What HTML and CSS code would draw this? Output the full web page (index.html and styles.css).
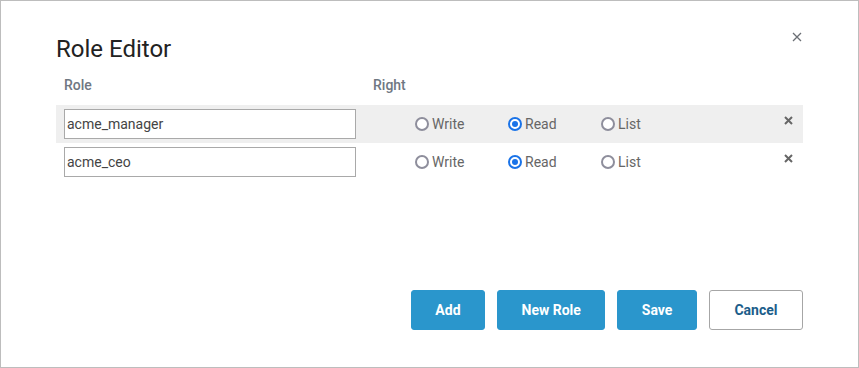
FILE: index.html
```html
<!DOCTYPE html>
<html lang="en">
<head>
  <meta charset="UTF-8">
  <meta name="viewport" content="width=device-width, initial-scale=1">
  <title>Role Editor</title>
  <link rel="stylesheet" href="styles.css">
</head>
<body>
  <div class="dialog">
    <div class="dialog-header">
      <h1>Role Editor</h1>
      <button class="close" aria-label="Close">
        <svg width="10" height="10" viewBox="0 0 10 10"><path d="M1 1L9 9M9 1L1 9" stroke="#6b6f75" stroke-width="1.3" fill="none"/></svg>
      </button>
    </div>

    <div class="table-head">
      <span class="col-role">Role</span>
      <span class="col-right">Right</span>
    </div>

    <div class="role-row shaded">
      <input class="role-input" type="text" value="acme_manager">
      <div class="rights">
        <label class="option"><input type="radio" name="r1"> Write</label>
        <label class="option"><input type="radio" name="r1" checked> Read</label>
        <label class="option"><input type="radio" name="r1"> List</label>
      </div>
      <button class="remove" aria-label="Remove">
        <svg width="9" height="9" viewBox="0 0 9 9"><path d="M1 1L8 8M8 1L1 8" stroke="#666" stroke-width="2" fill="none"/></svg>
      </button>
    </div>
    <div class="role-row">
      <input class="role-input" type="text" value="acme_ceo">
      <div class="rights">
        <label class="option"><input type="radio" name="r2"> Write</label>
        <label class="option"><input type="radio" name="r2" checked> Read</label>
        <label class="option"><input type="radio" name="r2"> List</label>
      </div>
      <button class="remove" aria-label="Remove">
        <svg width="9" height="9" viewBox="0 0 9 9"><path d="M1 1L8 8M8 1L1 8" stroke="#666" stroke-width="2" fill="none"/></svg>
      </button>
    </div>

    <div class="footer">
      <button class="btn">Add</button>
      <button class="btn">New Role</button>
      <button class="btn">Save</button>
      <button class="btn btn-outline">Cancel</button>
    </div>
  </div>
</body>
</html>
```

FILE: styles.css
```css
/* Base */
* {
  box-sizing: border-box;
  margin: 0;
  padding: 0;
}
body {
  font-family: 'Roboto', 'Liberation Sans', sans-serif;
  background: #fff;
  color: #333;
}
.dialog {
  width: 859px;
  height: 368px;
  border: 1px solid #bdbdbd;
  padding: 0 55px 37px 55px;
  display: flex;
  flex-direction: column;
}
.dialog-header {
  display: flex;
  justify-content: space-between;
  align-items: flex-start;
}
.dialog-header h1 {
  font-size: 24px;
  font-weight: 400;
  line-height: 28px;
  color: #222;
  margin-top: 34px;
}
.close {
  background: none;
  border: none;
  margin-top: 30px;
  width: 12px;
  height: 12px;
  display: flex;
  align-items: center;
  justify-content: center;
  cursor: pointer;
}
/* Table */
.table-head {
  display: flex;
  font-size: 14px;
  font-weight: 500;
  line-height: 20px;
  color: #6f7782;
  margin-top: 12px;
  margin-bottom: 10px;
}
.col-role {
  width: 317px;
  padding-left: 8px;
}
.role-row {
  display: flex;
  align-items: center;
  height: 38px;
  padding: 0 8px;
}
.role-row.shaded {
  background: #efefef;
}
.role-input {
  width: 292px;
  height: 30px;
  border: 1px solid #a9a9a9;
  background: #fff;
  font-family: inherit;
  font-size: 14px;
  color: #444;
  padding: 0 2px;
  outline: none;
}
.rights {
  display: flex;
  margin-left: 59px;
}
.option {
  width: 93px;
  display: flex;
  align-items: center;
  gap: 3px;
  font-size: 14px;
  color: #666;
}
.option input {
  appearance: none;
  width: 14px;
  height: 14px;
  border: 2px solid #8e8e9c;
  border-radius: 50%;
  background: #fff;
  position: relative;
}
.option input:checked {
  border-color: #1a73e8;
}
.option input:checked::after {
  content: '';
  position: absolute;
  left: 2px;
  top: 2px;
  width: 6px;
  height: 6px;
  border-radius: 50%;
  background: #1a73e8;
}
.remove {
  margin-left: auto;
  margin-right: 2px;
  margin-bottom: 8px;
  background: none;
  border: none;
  width: 9px;
  height: 9px;
  display: flex;
  cursor: pointer;
}
/* Footer */
.footer {
  margin-top: auto;
  display: flex;
  justify-content: flex-end;
  gap: 12px;
}
.btn {
  height: 40px;
  padding: 0 23.5px;
  border: 1px solid #2a96cc;
  border-radius: 3px;
  background: #2a96cc;
  color: #fff;
  font-family: inherit;
  font-size: 14px;
  font-weight: 700;
  cursor: pointer;
}
.btn-outline {
  background: #fff;
  border-color: #a6a6a6;
  color: #1b5d8a;
  padding: 0 24.5px;
}
```
